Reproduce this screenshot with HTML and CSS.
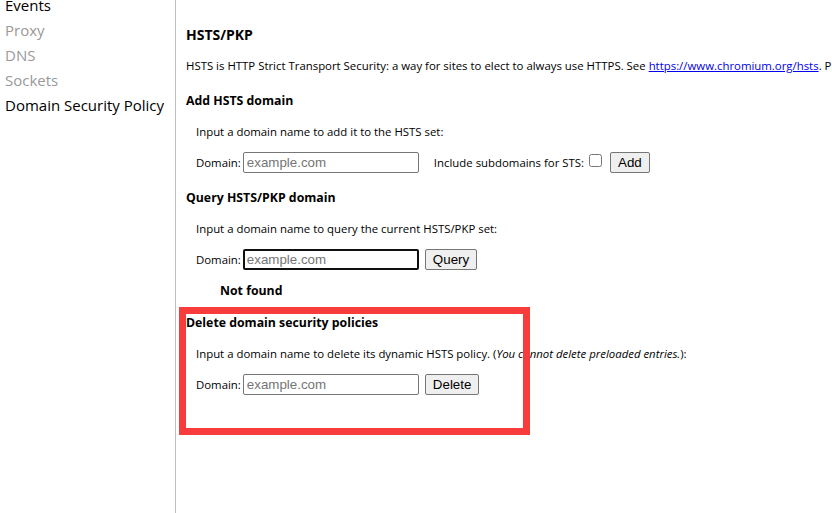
FILE: index.html
```html
<!DOCTYPE HTML><html>
<head>
  <title>net-internals</title>
  <meta name="viewport" content="width=device-width, initial-scale=1">
  <link rel="stylesheet" href="styles.css">
</head>
<body>
  <div class="page">
    <div class="sidebar">
      <ul class="tabs">
        <li class="tab">Events</li>
        <li class="tab disabled">Proxy</li>
        <li class="tab disabled">DNS</li>
        <li class="tab disabled">Sockets</li>
        <li class="tab">Domain Security Policy</li>
      </ul>
    </div>
    <div class="content">
      <h2>HSTS/PKP</h2>
      <p class="intro">HSTS is HTTP Strict Transport Security: a way for sites to elect to always use HTTPS. See <a href="#">https://www.chromium.org/hsts</a>. PKP is Public Key Pinning.</p>

      <h3>Add HSTS domain</h3>
      <div class="section">
        <p>Input a domain name to add it to the HSTS set:</p>
        <div class="row">
          <label>Domain: <input type="text" placeholder="example.com"></label>
          <label class="sts">Include subdomains for STS: <input type="checkbox"></label>
          <button>Add</button>
        </div>
      </div>

      <h3>Query HSTS/PKP domain</h3>
      <div class="section">
        <p>Input a domain name to query the current HSTS/PKP set:</p>
        <div class="row">
          <label>Domain: <input type="text" class="focused" placeholder="example.com"></label>
          <button>Query</button>
        </div>
        <div class="result">Not found</div>
      </div>

      <h3>Delete domain security policies</h3>
      <div class="section">
        <p>Input a domain name to delete its dynamic HSTS policy. (<i>You cannot delete preloaded entries.</i>):</p>
        <div class="row">
          <label>Domain: <input type="text" placeholder="example.com"></label>
          <button>Delete</button>
        </div>
      </div>
    </div>
  </div>
  <div class="highlight"></div>
</body>
</html>
```

FILE: styles.css
```css
html {
  font-family: "Segoe UI", "Open Sans", sans-serif;
}
body {
  margin: 0;
  overflow: hidden;
  height: 513px;
}
.page {
  display: flex;
  height: 100%;
}
.sidebar {
  width: 175px;
  flex-shrink: 0;
  border-right: 1px solid #c0c0c0;
  overflow: hidden;
}
.tabs {
  list-style: none;
  margin: -7px 0 0 0;
  padding: 0 0 0 5px;
}
.tab {
  font-size: 15px;
  line-height: 25px;
  color: #000;
  white-space: nowrap;
}
.tab.disabled {
  color: #999;
}
.content {
  padding: 0 0 0 10px;
  font-size: 11.4px;
  white-space: nowrap;
  overflow: hidden;
}
h2 {
  font-size: 14px;
  font-weight: bold;
  margin: 25px 0 0 0;
  line-height: 20px;
}
.intro {
  margin: 12px 0 0 0;
  line-height: 18px;
  height: 18px;
}
.intro a {
  color: #0000ee;
}
h3 {
  font-size: 12.3px;
  font-weight: bold;
  margin: 17px 0 0 0;
  line-height: 18px;
  height: 18px;
}
.section {
  padding-left: 10px;
}
.section p {
  margin: 13px 0 0 0;
  line-height: 18px;
  height: 18px;
}
.row {
  display: flex;
  align-items: center;
  margin-top: 10px;
  height: 22px;
}
.section + h3 {
  margin-top: 16px;
}
label {
  display: flex;
  align-items: center;
}
input[type=text] {
  width: 176px;
  height: 21px;
  box-sizing: border-box;
  margin: 0 0 0 2px;
  border: 1px solid #767676;
  border-radius: 2px;
  padding: 1px 3px;
  font-family: Arial, "Liberation Sans", sans-serif;
  font-size: 13.33px;
}
input.focused {
  border: 2px solid #101010;
  padding: 0 2px;
}
input::placeholder {
  color: #757575;
}
.sts {
  margin-left: 15px;
}
input[type=checkbox] {
  width: 13px;
  height: 13px;
  margin: 0 0 4px 5px;
}
button {
  margin-left: 6px;
  height: 21px;
  padding: 1px 7px;
  font-family: Arial, "Liberation Sans", sans-serif;
  font-size: 13.33px;
  background: #efefef;
  border: 1px solid #767676;
  border-radius: 2px;
}
.sts + button {
  margin-left: 8px;
}
.result {
  font-weight: bold;
  font-size: 12.3px;
  margin: 12px 0 -2px 24px;
  line-height: 18px;
}
.highlight {
  position: absolute;
  left: 179px;
  top: 307px;
  width: 351px;
  height: 128px;
  box-sizing: border-box;
  border: 7px solid #f83b3b;
}
```
